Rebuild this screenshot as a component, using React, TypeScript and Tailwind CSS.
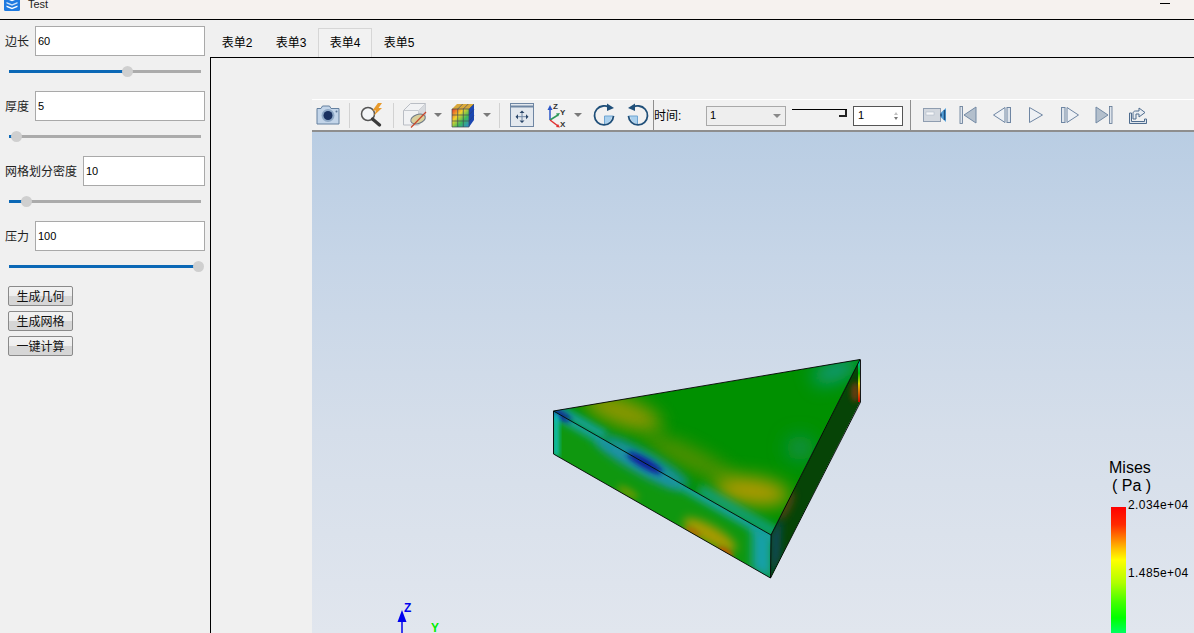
import React from "react";

const FONT = { fontFamily: '"Liberation Sans", "Noto Sans CJK SC", sans-serif' };

function Field({ label, value, labelW, pct }: { label: string; value: string; labelW: string; pct: number }) {
  return (
    <div className="flex flex-col h-[65px]">
      <div className="flex items-center h-[30px] pl-[5px] pr-[5px]">
        <span className={`${labelW} shrink-0 pt-[2px] text-[12px] leading-none text-[#222]`}>{label}</span>
        <div className="flex-1 h-[30px] bg-white border border-[#a9a9a9] flex items-center pl-[2px] text-[11px] text-black">{value}</div>
      </div>
      <div className="relative h-[3px] mt-[14px] mx-[9px] w-[192px] bg-[#ababab]">
        <div className="h-full bg-[#0b68b6]" style={{ width: `${pct}%` }} />
        <div className="absolute top-[-4px] w-[11px] h-[11px] rounded-full bg-[#cfcfcf]" style={{ left: `calc(${pct}% - 5px)` }} />
      </div>
    </div>
  );
}

function Btn({ children }: { children: string }) {
  return (
    <button className="w-[65px] h-[20px] pt-[1px] border border-[#8a8a8a] rounded-[2px] bg-[linear-gradient(#f2f2f2_0%,#eeeeee_50%,#d6d6d6_50%,#d6d6d6_100%)] text-[12px] leading-none text-[#111] flex items-center justify-center">
      {children}
    </button>
  );
}

function Tab({ children, active }: { children: string; active?: boolean }) {
  return (
    <div className={`w-[54px] h-[29px] flex items-center justify-center text-[12px] text-black ${active ? "border border-b-0 border-[#d6d6d6] bg-[#f2f2f2]" : ""}`}>
      {children}
    </div>
  );
}

const Caret = ({ w }: { w: string }) => (
  <div className={`${w} h-full flex items-center justify-center shrink-0`}>
    <div className="w-0 h-0 border-l-[4px] border-r-[4px] border-t-[4px] border-l-transparent border-r-transparent border-t-[#7a7a7a]" />
  </div>
);
const Sep = ({ w }: { w: string }) => (
  <div className={`${w} h-full flex items-center justify-center shrink-0`}>
    <div className="w-px h-[25px] bg-[#d2d2d2]" />
  </div>
);
const Slot = ({ w, children }: { w: string; children: React.ReactNode }) => (
  <div className={`${w} h-full flex items-center justify-center shrink-0`}>{children}</div>
);

const AppIcon = () => (
  <svg width="16" height="16" viewBox="0 0 16 16" className="mt-[-5px] ml-[4px] shrink-0">
    <rect width="16" height="16" rx="1.500" fill="#1f7ae0" />
    <path d="M8 2l5.500 2L8 6.200 2.500 4z" fill="#fff" />
    <path d="M2.500 7L8 9.200 13.500 7v1.500L8 10.700 2.500 8.500z" fill="#cfe3fa" />
    <path d="M2.500 10.500L8 12.700l5.500-2.200V12L8 14.200 2.500 12z" fill="#fff" />
  </svg>
);
const Camera = () => (
  <svg width="24" height="20" viewBox="0 0 24 20">
    <path d="M1 3.500h4l1.500-2.500h7l1.500 2.500h8v15.500H1z" fill="#c3d5e9" stroke="#64809f" strokeWidth="1" />
    <circle cx="12" cy="10.500" r="6.500" fill="#8fa9c6" />
    <circle cx="12" cy="10.500" r="4.500" fill="#1a3160" />
    <circle cx="20.500" cy="6.500" r="1" fill="#5a7596" />
  </svg>
);
const Lens = () => (
  <svg width="24" height="24" viewBox="0 0 24 24">
    <circle cx="8" cy="11" r="6.500" fill="#f4f6f8" stroke="#555" strokeWidth="1.500" />
    <path d="M12.500 16l7 6" stroke="#3a3a3a" strokeWidth="3.200" strokeLinecap="round" />
    <path d="M18 0l-5.500 7.500h3.500l-2 5 8-7.500h-3.500l3.500-5z" fill="#e89a2c" />
  </svg>
);
const CubeClip = () => (
  <svg width="26" height="26" viewBox="0 0 26 26">
    <path d="M1.500 8.500l7-7h15v14l-7 7.500H1.500z" fill="#f1f2f4" stroke="#b9bdc4" />
    <path d="M1.500 8.500h15V23M16.500 8.500l7-7" fill="none" stroke="#c4c8ce" />
    <path d="M16.500 8.500l7-7v14l-7 7.500z" fill="#d7dade" />
    <ellipse cx="16" cy="17" rx="7.500" ry="4.500" fill="#d8cf9c" stroke="#6f7b88" transform="rotate(-18 16 17)" />
    <path d="M9 25.500L24 10" stroke="#c8452a" strokeWidth="1.200" />
  </svg>
);
const ColorCube = () => (
  <svg width="24" height="25" viewBox="0 0 24 25">
    <defs>
      <linearGradient id="cc" x1="0" y1="0" x2="1" y2="1">
        <stop offset="0" stopColor="#e8372a" />
        <stop offset="0.350" stopColor="#f2d22c" />
        <stop offset="0.650" stopColor="#3dbb5a" />
        <stop offset="1" stopColor="#2b86d8" />
      </linearGradient>
    </defs>
    <path d="M1 6l5-5h17l-5 5z" fill="#d9a83a" />
    <path d="M18 6l5-5v16l-5 7z" fill="#1b47b2" />
    <path d="M1 6h17v18H1z" fill="url(#cc)" />
    <path d="M6.700 6v18M12.300 6v18M1 12h17M1 18h17M1 6h17v18H1zM18 6l5-5" stroke="#3f4a55" strokeWidth="0.700" fill="none" />
    <path d="M18 12l5-5.500M18 18l5-5.500M6.700 6l5-5M12.300 6l5-5" stroke="#2a3f73" strokeWidth="0.600" />
  </svg>
);
const Fit = () => (
  <svg width="24" height="24" viewBox="0 0 24 24">
    <rect x="0.500" y="0.500" width="23" height="23" fill="#e3e8ee" stroke="#6f86a3" />
    <path d="M0.500 3.500h23" stroke="#6f86a3" strokeWidth="2" />
    <path d="M12 7.500l-2.500 2.500h5zM12 20l-2.500-2.500h5zM5.500 13.700l2.500-2.500v5zM18.500 13.700l-2.500-2.500v5z" fill="#2a4568" />
    <path d="M12 10v7.500M8 13.700h8" stroke="#6f86a3" />
  </svg>
);
const Axes = () => (
  <svg width="28" height="28" viewBox="-3 0 28 28">
    <path d="M6 19V8" stroke="#2a55c8" strokeWidth="1.500" />
    <path d="M6 4l-2.500 5h5z" fill="#2a55c8" />
    <path d="M6 19l8-5" stroke="#2f9a5a" strokeWidth="1.500" />
    <path d="M16 12l-4 .5 2 3z" fill="#2f9a5a" />
    <path d="M6 19l8 6" stroke="#e03030" strokeWidth="1.500" />
    <path d="M16 26.500l-4-.5 2-3z" fill="#e03030" />
    <text x="9" y="7.500" fontSize="8" fontWeight="700" fill="#333">Z</text>
    <text x="16" y="14" fontSize="8" fontWeight="700" fill="#333">Y</text>
    <text x="16" y="26" fontSize="8" fontWeight="700" fill="#333">X</text>
  </svg>
);
const Rot = ({ flip }: { flip?: boolean }) => (
  <svg width="24" height="24" viewBox="0 0 24 24" style={flip ? { transform: "scaleX(-1)" } : undefined}>
    <path d="M12 13h8v.5A8 8 0 0 1 12 21z" fill="#a9d0ee" />
    <path d="M12.500 13v8M12.500 13h9" stroke="#6fa5d2" strokeWidth="1" />
    <path d="M11 3A9.500 9.500 0 1 0 21.500 13" fill="none" stroke="#1f4f79" strokeWidth="1.800" />
    <path d="M11 3c2-.3 4 0 5 .7" fill="none" stroke="#1f4f79" strokeWidth="1.800" />
    <path d="M15 0.500l7 4.500-7 3z" fill="#1f4f79" />
  </svg>
);
const VideoCam = () => (
  <svg width="24" height="16" viewBox="0 0 24 16">
    <rect x="0.500" y="1.500" width="17" height="13" fill="#d3d8df" stroke="#8f9db0" />
    <rect x="3" y="5" width="8" height="3" fill="#f6f7f9" stroke="#a8b3c2" strokeWidth="0.500" />
    <path d="M18 5.500l5-4.500v14l-5-4.500z" fill="#57a0d8" />
    <path d="M18 6.500v3M21.500 3v10" stroke="#1e4f7e" strokeWidth="1.500" />
  </svg>
);
const First = () => (
  <svg width="18" height="18" viewBox="0 0 18 18">
    <path d="M17 1L5 9l12 8z" fill="#b3bfcc" stroke="#7289a4" />
    <rect x="1" y="0.500" width="2.500" height="17" fill="#dfe5ec" stroke="#5f7793" strokeWidth="0.800" />
  </svg>
);
const Prev = () => (
  <svg width="20" height="18" viewBox="0 0 20 18">
    <path d="M13 1.500L1.500 9 13 16.500z" fill="#eef1f5" stroke="#6f86a3" />
    <rect x="15" y="1.500" width="3.500" height="15" fill="#dfe5ec" stroke="#6f86a3" />
  </svg>
);
const Play = () => (
  <svg width="18" height="18" viewBox="0 0 18 18">
    <path d="M2.500 1.500L15.500 9 2.500 16.500z" fill="#eef1f5" stroke="#6f86a3" />
  </svg>
);
const Next = () => (
  <svg width="20" height="18" viewBox="0 0 20 18">
    <rect x="1.500" y="1.500" width="3.500" height="15" fill="#dfe5ec" stroke="#6f86a3" />
    <path d="M7 1.500L18.500 9 7 16.500z" fill="#eef1f5" stroke="#6f86a3" />
  </svg>
);
const Last = () => (
  <svg width="18" height="18" viewBox="0 0 18 18">
    <path d="M1 1l12 8-12 8z" fill="#b3bfcc" stroke="#7289a4" />
    <rect x="14.500" y="0.500" width="2.500" height="17" fill="#dfe5ec" stroke="#5f7793" strokeWidth="0.800" />
  </svg>
);
const Export = () => (
  <svg width="20" height="20" viewBox="0 0 20 20">
    <path d="M1.500 8v10.500h17V14h-2v2.500h-13V8z" fill="#dfe5ec" stroke="#4f6c8e" />
    <path d="M5 14V8.500c0-1.500 1-2.500 2.500-2.500H11V3l6 4.500-6 4.500V9H8v5z" fill="#e9edf2" stroke="#4f6c8e" />
  </svg>
);

const Model = () => (
  <svg className="absolute inset-0 w-full h-full" viewBox="312 132 882 501">
    <defs>
      <clipPath id="top"><polygon points="553.500,411 860,359.500 771,535" /></clipPath>
      <clipPath id="front"><polygon points="553.500,411 771,535 770.500,578 553.500,454" /></clipPath>
      <clipPath id="side"><polygon points="771,535 860,359.500 860,402 770.500,578" /></clipPath>
      <filter id="b8" x="-80%" y="-120%" width="260%" height="340%"><feGaussianBlur stdDeviation="9" /></filter>
      <filter id="b5" x="-50%" y="-100%" width="200%" height="300%"><feGaussianBlur stdDeviation="5" /></filter>
      <filter id="b3" x="-50%" y="-100%" width="200%" height="300%"><feGaussianBlur stdDeviation="3.500" /></filter>
      <filter id="b2" x="-50%" y="-100%" width="200%" height="300%"><feGaussianBlur stdDeviation="2.500" /></filter>
      <linearGradient id="stripe" x1="0" y1="0" x2="0" y2="1">
        <stop offset="0" stopColor="#00b0b0" />
        <stop offset="0.300" stopColor="#00c000" />
        <stop offset="0.550" stopColor="#e0d000" />
        <stop offset="1" stopColor="#d00000" />
      </linearGradient>
    </defs>
    <g clipPath="url(#top)">
      <rect x="540" y="350" width="330" height="200" fill="#009000" />
      <ellipse cx="622" cy="412" rx="42" ry="14" transform="rotate(20 622 412)" fill="#a89800" opacity="0.850" filter="url(#b8)" />
      <ellipse cx="690" cy="458" rx="50" ry="10" transform="rotate(26 690 458)" fill="#7f9000" opacity="0.700" filter="url(#b8)" />
      <ellipse cx="752" cy="491" rx="38" ry="14" transform="rotate(8 752 491)" fill="#b09a00" filter="url(#b8)" />
      <ellipse cx="835" cy="371" rx="24" ry="10" transform="rotate(-22 835 371)" fill="#109a80" filter="url(#b8)" />
      <ellipse cx="800" cy="448" rx="14" ry="13" fill="#078f45" filter="url(#b8)" />
      <g transform="translate(553.500,411) rotate(29.700)">
        <rect x="-5" y="-9" width="62" height="10" fill="#14a098" filter="url(#b3)" />
        <ellipse cx="105" cy="-2" rx="50" ry="9" fill="#1890a0" filter="url(#b5)" />
        <ellipse cx="105" cy="-1" rx="20" ry="4" fill="#0a1f9c" filter="url(#b2)" />
        <rect x="165" y="-9" width="95" height="10" fill="#14a088" filter="url(#b5)" />
        <ellipse cx="8" cy="-1" rx="12" ry="3" fill="#0a1a9a" filter="url(#b2)" />
      </g>
    </g>
    <g clipPath="url(#front)">
      <rect x="540" y="400" width="240" height="185" fill="#0f970f" />
      <g transform="translate(553.500,411) rotate(29.700)">
        <rect x="-5" y="-6" width="270" height="12" fill="#18a098" filter="url(#b3)" />
        <ellipse cx="100" cy="4" rx="50" ry="8" fill="#1a90a8" filter="url(#b5)" />
        <ellipse cx="105" cy="1" rx="20" ry="4" fill="#0a1f9c" filter="url(#b2)" />
        <ellipse cx="197" cy="30" rx="30" ry="9" fill="#a89a00" filter="url(#b5)" />
        <ellipse cx="219" cy="38" rx="9" ry="4" fill="#c65200" filter="url(#b2)" />
        <ellipse cx="181" cy="36" rx="9" ry="3" fill="#b86a00" filter="url(#b2)" />
        <ellipse cx="105" cy="34" rx="12" ry="4" fill="#6f9a00" filter="url(#b3)" />
        <ellipse cx="8" cy="1" rx="12" ry="3" fill="#0a1a9a" filter="url(#b2)" />
      </g>
      <path d="M553 411L559 414 559 458 553 454z" fill="#10c0c0" filter="url(#b2)" />
      <path d="M752 525L772 535 772 580 752 570z" fill="#12a0a8" filter="url(#b5)" />
    </g>
    <g clipPath="url(#side)">
      <rect x="765" y="355" width="100" height="230" fill="#064406" />
      <path d="M771 535L782 515 780 558 771 578z" fill="#0f4a55" filter="url(#b3)" />
      <ellipse cx="786" cy="505" rx="6" ry="16" fill="#4a4410" transform="rotate(25 786 505)" filter="url(#b3)" />
      <ellipse cx="855" cy="392" rx="4" ry="10" fill="#6a3a10" filter="url(#b2)" />
      <path d="M771 578L861 402" stroke="#1aa81a" strokeWidth="1.500" />
      <rect x="858" y="361" width="3" height="41" fill="url(#stripe)" />
    </g>
    <g fill="none" stroke="#000" strokeWidth="0.900" strokeLinejoin="round">
      <polygon points="553.500,411 860,359.500 771,535" />
      <path d="M553.500 411V454L770.500 578 771 535M770.500 578L860.500 402V359.500" />
    </g>
    <path d="M402 633V620" stroke="#0000ee" strokeWidth="1.500" />
    <path d="M402 610l-4.500 12h9z" fill="#0000ee" />
  </svg>
);

function Legend() {
  const stops = "linear-gradient(#ff0000 0%,#ff2a00 14%,#ff8000 25%,#ffc000 33%,#ffff00 42%,#b0ff00 60%,#40ff00 76%,#00ff00 88%,#00ff60 100%)";
  return (
    <div className="absolute right-0 bottom-0 w-[85px] h-[170px] text-black">
      <div className="absolute left-0 top-[-4px] text-[16px] leading-[18px]">Mises</div>
      <div className="absolute left-[3px] top-[14px] text-[16px] leading-[18px] whitespace-pre">( Pa )</div>
      <div className="absolute left-[2px] top-[44px] w-[15px] h-[126px]" style={{ background: stops }} />
      <div className="absolute left-[19px] top-[35px] text-[12px] leading-[14px] tracking-[0.4px]">2.034e+04</div>
      <div className="absolute left-[19px] top-[103px] text-[12px] leading-[14px] tracking-[0.4px]">1.485e+04</div>
    </div>
  );
}

export default function App() {
  return (
    <div className="w-[1194px] h-[633px] overflow-hidden flex flex-col bg-[#f0f0f0]" style={FONT}>
      <div className="h-[20px] shrink-0 border-b border-black bg-[#f6f2ef] flex items-start overflow-hidden">
        <AppIcon />
        <span className="ml-[8px] mt-[-4px] text-[11px] leading-[16px] text-[#222]">Test</span>
        <div className="ml-auto mr-[24px] mt-[3px] w-[10px] h-px bg-black" />
      </div>

      <div className="flex-1 flex min-h-0">
        <div className="w-[210px] shrink-0 pt-[6px] flex flex-col">
          <Field label="边长" value="60" labelW="w-[30px]" pct={61.500} />
          <Field label="厚度" value="5" labelW="w-[30px]" pct={3.500} />
          <Field label="网格划分密度" value="10" labelW="w-[78px]" pct={9} />
          <Field label="压力" value="100" labelW="w-[30px]" pct={98.500} />
          <div className="flex flex-col gap-[5px] pl-[8px]">
            <Btn>生成几何</Btn>
            <Btn>生成网格</Btn>
            <Btn>一键计算</Btn>
          </div>
        </div>

        <div className="flex-1 flex flex-col min-w-0">
          <div className="h-[37px] shrink-0 flex items-end">
            <Tab>表单2</Tab>
            <Tab>表单3</Tab>
            <Tab active>表单4</Tab>
            <Tab>表单5</Tab>
          </div>
          <div className="flex-1 min-h-0 border-t border-l border-black pl-[101px] pt-[41px] flex flex-col">
            <div className="h-[33px] shrink-0 flex bg-[#f1f1f1] border-t border-t-white border-b-2 border-b-[#8e8e8e] text-[12px] text-black">
              <Slot w="w-[32px]"><Camera /></Slot>
              <Sep w="w-[10px]" />
              <Slot w="w-[36px]"><Lens /></Slot>
              <Sep w="w-[6px]" />
              <Slot w="w-[38px]"><CubeClip /></Slot>
              <Caret w="w-[8px]" />
              <Slot w="w-[42px]"><ColorCube /></Slot>
              <Caret w="w-[6px]" />
              <Sep w="w-[18px]" />
              <Slot w="w-[28px]"><Fit /></Slot>
              <Slot w="w-[38px]"><Axes /></Slot>
              <Caret w="w-[8px]" />
              <Slot w="w-[44px]"><Rot /></Slot>
              <Slot w="w-[24px]"><Rot flip /></Slot>
              <div className="w-[4px] h-full flex justify-end shrink-0"><div className="w-px h-full bg-[#8e8e8e]" /></div>
              <div className="w-[52px] h-full flex items-center pt-[2px] shrink-0">时间:</div>
              <div className="w-[80px] h-[20px] self-center mt-[1px] border border-[#a9a9a9] bg-[#eeeeee] text-[11px] flex items-center justify-between pl-[3px] pr-[4px] shrink-0">
                <span>1</span>
                <div className="w-0 h-0 border-l-[4px] border-r-[4px] border-t-[4px] border-l-transparent border-r-transparent border-t-[#888]" />
              </div>
              <div className="w-[55px] ml-[6px] h-[9px] self-center mt-[-4px] border-t border-black relative shrink-0">
                <div className="absolute right-0 top-0 w-[8px] h-[7px] border-r-2 border-b-2 border-[#222]" />
              </div>
              <div className="w-[50px] h-[20px] self-center ml-[6px] mt-[1px] border border-[#555] bg-white text-[11px] flex items-center justify-between pl-[4px] pr-[4px] shrink-0">
                <span>1</span>
                <div className="flex flex-col gap-[2px]">
                  <div className="w-0 h-0 border-l-[2px] border-r-[2px] border-b-[3px] border-l-transparent border-r-transparent border-b-[#c0c0c0]" />
                  <div className="w-0 h-0 border-l-[2px] border-r-[2px] border-t-[3px] border-l-transparent border-r-transparent border-t-[#777]" />
                </div>
              </div>
              <div className="w-[8px] h-full flex justify-end shrink-0"><div className="w-px h-full bg-[#8e8e8e]" /></div>
              <div className="w-[7px] shrink-0" />
              <Slot w="w-[33px]"><VideoCam /></Slot>
              <Slot w="w-[34px]"><First /></Slot>
              <Slot w="w-[34px]"><Prev /></Slot>
              <Slot w="w-[34px]"><Play /></Slot>
              <Slot w="w-[34px]"><Next /></Slot>
              <Slot w="w-[34px]"><Last /></Slot>
              <Slot w="w-[34px]"><Export /></Slot>
            </div>
            <div className="relative flex-1 min-h-0 overflow-hidden bg-[linear-gradient(180deg,#b9cde3_0%,#c6d5e7_25%,#d5deea_60%,#e1e6ee_100%)]">
              <Model />
              <div className="absolute left-[92px] top-[469px] text-[12px] leading-[14px] font-bold text-[#0000ee]">Z</div>
              <div className="absolute left-[119px] top-[489px] text-[12px] leading-[14px] font-bold text-[#00ee00]">Y</div>
              <Legend />
            </div>
          </div>
        </div>
      </div>
    </div>
  );
}
